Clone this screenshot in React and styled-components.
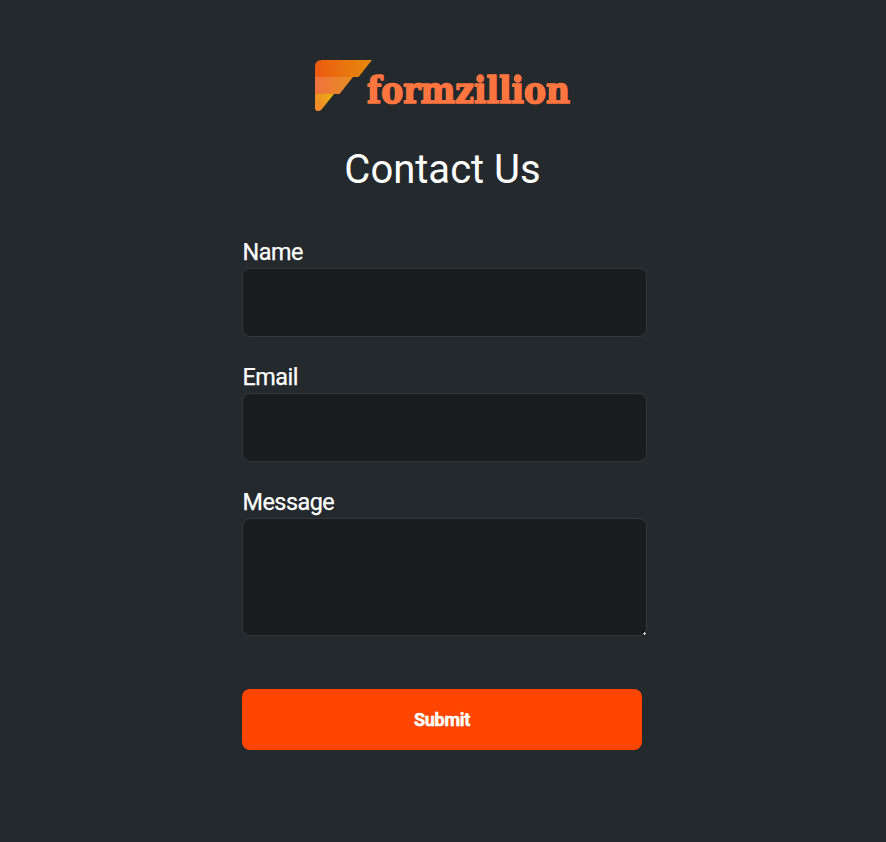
import React from "react";
import styled, { createGlobalStyle, css } from "styled-components";

const GlobalStyle = createGlobalStyle`
  * { box-sizing: border-box; }
  body {
    margin: 0;
    background: #24292d;
    color: #fff;
    font-family: Roboto, "Liberation Sans", sans-serif;
  }
`;

const Page = styled.main`
  display: flex;
  flex-direction: column;
  align-items: center;
  min-height: 842px;
  padding: 60px 0 0;
`;

const Logo = styled.svg`
  display: block;
  width: 256px;
  height: 52px;
  overflow: visible;
`;

const Wordmark = styled.text`
  font-family: "DejaVu Serif", serif;
  font-weight: 700;
  font-size: 36.5px;
  fill: #ff7540;
  stroke: #ff7540;
  stroke-width: 1.7px;
  stroke-linejoin: round;
`;

const Title = styled.h1`
  margin: 34px 1px 0 0;
  font-size: 40px;
  font-weight: 400;
  line-height: 48px;
`;

const Form = styled.form`
  display: flex;
  flex-direction: column;
  width: 402px;
  margin-top: 46px;
`;

const Field = styled.div`
  display: flex;
  flex-direction: column;
  width: 405px;
  margin-bottom: 28px;
`;

const Label = styled.label`
  height: 28px;
  padding-left: 0.5px;
  font-size: 23.4px;
  letter-spacing: -0.5px;
  line-height: 24px;
  -webkit-text-stroke: 0.25px #fff;
`;

const control = css`
  display: block;
  width: 405px;
  margin: 0;
  padding: 16px;
  border: 1px solid #34383b;
  border-radius: 8px;
  outline: none;
  background: #191d20;
  color: #fff;
  font: inherit;
  font-size: 20px;
`;

const Input = styled.input`
  ${control}
  height: 69px;
`;

const TextArea = styled.textarea`
  ${control}
  height: 118px;
  resize: both;

  &::-webkit-resizer {
    background:
      linear-gradient(#d0d0d0, #d0d0d0) right 0 bottom 1px / 3px 1px no-repeat,
      linear-gradient(#d0d0d0, #d0d0d0) right 1px bottom 0 / 1px 3px no-repeat,
      linear-gradient(#030405, #030405) right 2px bottom 2px / 2px 2px no-repeat;
  }
`;

const SubmitButton = styled.button`
  width: 400px;
  height: 61px;
  margin-top: 25px;
  padding: 0;
  border: 0;
  border-radius: 8px;
  background: #ff4500;
  color: #fff;
  font: inherit;
  font-size: 18px;
  font-weight: 700;
  letter-spacing: -0.3px;
  -webkit-text-stroke: 0.5px #fff;
`;

function Brand() {
  return (
    <Logo viewBox="0 0 256 52" role="img" aria-label="formzillion">
      <defs>
        <linearGradient id="top" x1="0" x2="1">
          <stop offset="0" stopColor="#ec5a10" />
          <stop offset="1" stopColor="#e58b0b" />
        </linearGradient>
        <linearGradient id="middle" x1="0" x2="1">
          <stop offset="0" stopColor="#ef7240" />
          <stop offset="1" stopColor="#e88d20" />
        </linearGradient>
        <linearGradient id="bottom" x1="0" x2="1" y1="0.5" y2="0">
          <stop offset="0" stopColor="#f28a2a" />
          <stop offset="1" stopColor="#e5b40b" />
        </linearGradient>
      </defs>
      <path d="M0 7Q0 0 7 0H57L43.5 17H0Z" fill="url(#top)" />
      <path d="M0 17H38L24.5 34H0Z" fill="url(#middle)" />
      <path d="M0 34H19L7 49Q5.5 51 3.5 51H2.5Q0 51 0 48Z" fill="url(#bottom)" />
      <Wordmark x="52" y="43" textLength="203" lengthAdjust="spacingAndGlyphs">
        formzillion
      </Wordmark>
    </Logo>
  );
}

export default function App() {
  return (
    <>
      <GlobalStyle />
      <Page>
        <Brand />
        <Title>Contact Us</Title>
        <Form onSubmit={(event) => event.preventDefault()}>
          <Field>
            <Label htmlFor="name">Name</Label>
            <Input id="name" type="text" />
          </Field>
          <Field>
            <Label htmlFor="email">Email</Label>
            <Input id="email" type="email" />
          </Field>
          <Field>
            <Label htmlFor="message">Message</Label>
            <TextArea id="message" />
          </Field>
          <SubmitButton type="submit">Submit</SubmitButton>
        </Form>
      </Page>
    </>
  );
}
